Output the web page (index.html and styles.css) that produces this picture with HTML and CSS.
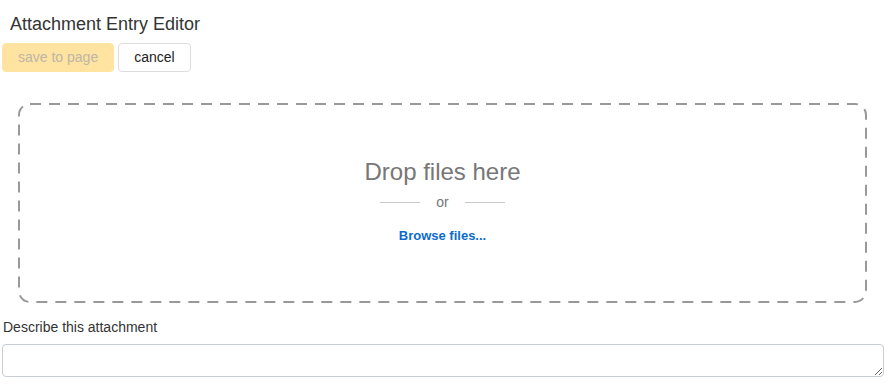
FILE: index.html
```html
<!DOCTYPE html>
<html lang="en">

<head>
  <meta charset="UTF-8">
  <meta name="viewport" content="width=device-width, initial-scale=1.0">
  <title>Attachment Entry Editor</title>
  <link rel="stylesheet" href="styles.css">
</head>

<body>
  <div class="editor">
    <h2 class="editor-title">Attachment Entry Editor</h2>

    <div class="editor-actions">
      <button class="btn btn-save" disabled>save to page</button>
      <button class="btn btn-cancel">cancel</button>
    </div>

    <div class="dropzone">
      <!-- dashed outline, drawn so the dash length matches -->
      <svg class="dropzone-outline" aria-hidden="true">
        <rect x="0" y="0" width="100%" height="100%" rx="11" ry="11"></rect>
      </svg>
      <div class="dropzone-title">Drop files here</div>
      <div class="dropzone-or">
        <span class="dropzone-rule"></span>
        <span>or</span>
        <span class="dropzone-rule"></span>
      </div>
      <a href="#" class="dropzone-browse">Browse files...</a>
    </div>

    <label class="field-label" for="desc">Describe this attachment</label>
    <textarea id="desc" class="field-input"></textarea>
  </div>
</body>

</html>
```

FILE: styles.css
```css
:root {
  --text-color: #333;
  --muted-color: #777;
  --link-color: #0b6bcb;
}

* {
  box-sizing: border-box;
}

body {
  margin: 0;
  font-family: "Liberation Sans", Arial, sans-serif;
  color: var(--text-color);
  background: #fff;
}

.editor {
  padding: 0 3px 0 2px;
}

.editor-title {
  margin: 14px 0 0 8px;
  font-size: 18px;
  line-height: 20px;
  font-weight: normal;
}

.editor-actions {
  display: flex;
  gap: 4px;
  margin-top: 9px;
}

.btn {
  font-family: inherit;
  font-size: 14px;
  line-height: 17px;
  padding: 5px 15px;
  border-radius: 4px;
  border: 1px solid #ddd;
  background: #fff;
  color: #222;
}

.btn-save {
  background: #ffe3a0;
  border-color: #ffe3a0;
  color: #bdb6a6;
}

.dropzone {
  position: relative;
  margin: 31px 17px 0 16px;
  height: 200px;
  display: flex;
  flex-direction: column;
  align-items: center;
  justify-content: center;
  padding-bottom: 4px;
}

.dropzone-outline {
  position: absolute;
  top: 1px;
  left: 1px;
  width: calc(100% - 2px);
  height: calc(100% - 2px);
  overflow: visible;
}

.dropzone-outline rect {
  fill: none;
  stroke: #999;
  stroke-width: 2;
  stroke-dasharray: 11 8;
}

.dropzone-title {
  font-size: 24px;
  line-height: 28px;
  color: var(--muted-color);
}

.dropzone-or {
  display: flex;
  align-items: center;
  gap: 16px;
  margin-top: 8px;
  font-size: 14px;
  line-height: 16px;
  color: var(--muted-color);
}

.dropzone-rule {
  width: 40px;
  height: 1px;
  background: #c8c8c8;
}

.dropzone-browse {
  margin-top: 18px;
  font-size: 13px;
  line-height: 16px;
  font-weight: bold;
  color: var(--link-color);
  text-decoration: none;
}

.field-label {
  display: block;
  margin: 16px 0 0 1px;
  font-size: 14px;
  line-height: 16px;
}

.field-input {
  display: block;
  width: 100%;
  height: 33px;
  margin-top: 9px;
  border: 1px solid #c9cdd4;
  border-radius: 4px;
  font-family: inherit;
}
```
